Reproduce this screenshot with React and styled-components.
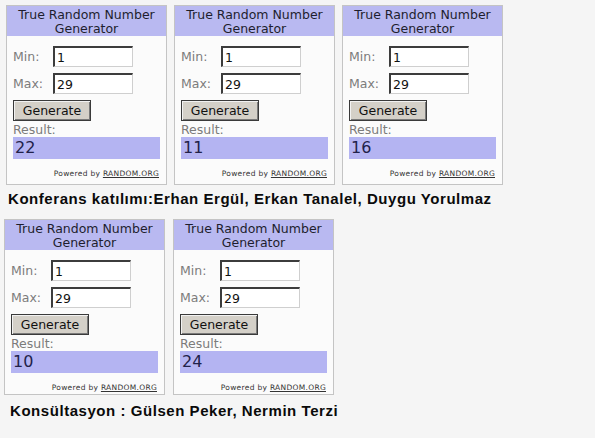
import React from "react";
import styled, { createGlobalStyle } from "styled-components";

const GlobalStyle = createGlobalStyle`
  html, body {
    margin: 0;
    padding: 0;
    background: #f5f5f5;
  }
  body {
    width: 595px;
    height: 438px;
    overflow: hidden;
    font-family: "DejaVu Sans", Verdana, sans-serif;
  }
`;

const Page = styled.div`
  display: flex;
  flex-direction: column;
`;

const Row = styled.div`
  display: flex;
  gap: ${(p) => p.gap}px;
  padding: ${(p) => p.top}px 0 0 ${(p) => p.left}px;
`;

const Panel = styled.div`
  width: 161px;
  height: ${(p) => p.height}px;
  box-sizing: border-box;
  border: 1px solid #c4c4c4;
  background: #fbfbfb;
  display: flex;
  flex-direction: column;
`;

const Header = styled.div`
  height: 30px;
  box-sizing: border-box;
  padding-top: 2px;
  background: #b9b9f1;
  color: #1e1e2e;
  font-size: 12.5px;
  line-height: 13.5px;
  text-align: center;
`;

const Body = styled.div`
  padding: 10px 6px 0 6px;
  display: flex;
  flex-direction: column;
`;

const Field = styled.div`
  display: flex;
  align-items: center;
  height: 21px;
  margin-bottom: 6px;
`;

const Label = styled.span`
  width: 40px;
  color: #7c7c7c;
  font-size: 12.5px;
`;

const Input = styled.div`
  width: 80px;
  height: 21px;
  box-sizing: border-box;
  background: #fff;
  border-top: 2px solid #3c3c3c;
  border-left: 2px solid #3c3c3c;
  border-right: 1px solid #cfcfcf;
  border-bottom: 1px solid #cfcfcf;
  padding: 2px 0 0 2px;
  font-size: 12.5px;
  color: #111;
`;

const Button = styled.div`
  width: 78px;
  height: 21px;
  box-sizing: border-box;
  background: #d4d0c8;
  border: 1px solid #3a3a3a;
  box-shadow: inset 1px 1px #f2f2f2, inset -1px -1px #7a7a7a;
  display: flex;
  align-items: center;
  justify-content: center;
  font-size: 12.5px;
  color: #111;
`;

const ResultLabel = styled.div`
  margin-top: 2px;
  height: 14px;
  line-height: 13px;
  color: #7c7c7c;
  font-size: 12.5px;
`;

const ResultBar = styled.div`
  height: 22px;
  background: #b4b4f2;
  color: #22224a;
  font-size: 16px;
  line-height: 22px;
  padding-left: 2px;
`;

const Powered = styled.div`
  margin-top: 10px;
  text-align: right;
  padding-right: 1px;
  font-size: 7.5px;
  color: #333;
  letter-spacing: 0.3px;
  span {
    text-decoration: underline;
  }
`;

const Caption = styled.div`
  font-family: "Liberation Sans", Arial, sans-serif;
  font-weight: bold;
  font-size: 15px;
  letter-spacing: 0.55px;
  color: #0a0a0a;
  padding-left: ${(p) => p.left}px;
  margin-top: ${(p) => p.top}px;
  height: 18px;
  line-height: 18px;
`;

function Generator({ value, height }) {
  return (
    <Panel height={height}>
      <Header>
        True Random Number
        <br />
        Generator
      </Header>
      <Body>
        <Field>
          <Label>Min:</Label>
          <Input>1</Input>
        </Field>
        <Field>
          <Label>Max:</Label>
          <Input>29</Input>
        </Field>
        <Button>Generate</Button>
        <ResultLabel>Result:</ResultLabel>
        <ResultBar>{value}</ResultBar>
        <Powered>
          Powered by <span>RANDOM.ORG</span>
        </Powered>
      </Body>
    </Panel>
  );
}

export default function App() {
  return (
    <>
      <GlobalStyle />
      <Page>
        <Row top={5} left={6} gap={7}>
          <Generator value="22" height={180} />
          <Generator value="11" height={180} />
          <Generator value="16" height={180} />
        </Row>
        <Caption left={8} top={5}>
          Konferans katılımı:Erhan Ergül, Erkan Tanalel, Duygu Yorulmaz
        </Caption>
        <Row top={11} left={4} gap={8}>
          <Generator value="10" height={176} />
          <Generator value="24" height={176} />
        </Row>
        <Caption left={10} top={7}>
          Konsültasyon : Gülsen Peker, Nermin Terzi
        </Caption>
      </Page>
    </>
  );
}
